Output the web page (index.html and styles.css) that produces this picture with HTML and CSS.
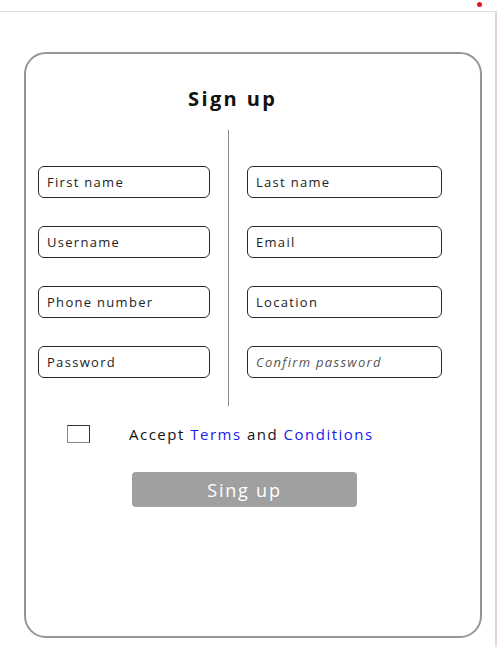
FILE: index.html
```html
<!DOCTYPE html>
<html lang="en">
<head>
  <meta charset="UTF-8">
  <meta name="viewport" content="width=device-width, initial-scale=1.0">
  <title>Sign up</title>
  <link rel="stylesheet" href="styles.css">
</head>
<body>
  <span class="dot"></span>
  <div class="frame">
    <div class="card">
      <h2>Sign up</h2>
      <div class="fields">
        <div class="col col-left">
          <input type="text" placeholder="First name">
          <input type="text" placeholder="Username">
          <input type="text" placeholder="Phone number">
          <input type="password" placeholder="Password">
        </div>
        <div class="divider"></div>
        <div class="col col-right">
          <input type="text" placeholder="Last name">
          <input type="email" placeholder="Email">
          <input type="text" placeholder="Location">
          <input type="password" class="confirm" placeholder="Confirm password">
        </div>
      </div>
      <div class="terms">
        <span class="check"></span>
        <p>Accept <a href="#">Terms</a> and <a href="#">Conditions</a></p>
      </div>
      <button>Sing up</button>
    </div>
  </div>
</body>
</html>
```

FILE: styles.css
```css
body {
  margin: 0;
  font-family: 'Open Sans', sans-serif;
  background: #fff;
}
.dot {
  position: absolute;
  top: 2px;
  left: 477px;
  width: 5px;
  height: 5px;
  border-radius: 50%;
  background: #e8141c;
}
.frame {
  margin-top: 11px;
  width: 495px;
  height: 636px;
  border-top: 1px solid #e8dcdc;
  border-right: 2px solid #e6d6d6;
}
.card {
  box-sizing: border-box;
  margin: 40px 0 0 24px;
  width: 458px;
  height: 586px;
  border: 2px solid #959595;
  border-radius: 22px;
}
h2 {
  margin: 31px 0 0 162px;
  font-size: 20px;
  font-weight: 700;
  letter-spacing: 2.4px;
  color: #111;
}
.fields {
  display: flex;
  margin-top: 18px;
  padding-left: 12px;
}
.col {
  display: flex;
  flex-direction: column;
  gap: 28px;
  padding: 36px 0 28px;
}
.col-left {
  width: 172px;
}
.col-right {
  width: 195px;
}
.divider {
  width: 1px;
  margin: 0 18px;
  background: #8a8a8a;
}
input {
  box-sizing: border-box;
  height: 32px;
  padding: 0 8px;
  border: 1.5px solid #2a2a2a;
  border-radius: 6px;
  font-family: inherit;
  font-size: 13px;
  letter-spacing: 1.3px;
  background: #fff;
}
input::placeholder {
  color: #222;
}
.confirm::placeholder {
  color: #555;
  font-style: italic;
}
.terms {
  display: flex;
  align-items: center;
  margin-top: 18px;
  padding-left: 41px;
}
.check {
  box-sizing: border-box;
  width: 23px;
  height: 18px;
  border: 1px solid #333;
  border-left-color: #888;
  border-bottom-color: #888;
}
.terms p {
  margin: 0 0 0 39px;
  font-size: 15px;
  letter-spacing: 1.5px;
  color: #111;
}
.terms a {
  color: #2020f0;
  text-decoration: none;
}
button {
  display: block;
  margin: 28px 0 0 106px;
  width: 225px;
  height: 35px;
  border: none;
  border-radius: 4px;
  background: #a0a0a0;
  color: #fff;
  font-family: inherit;
  font-size: 18px;
  letter-spacing: 1.8px;
}
```
